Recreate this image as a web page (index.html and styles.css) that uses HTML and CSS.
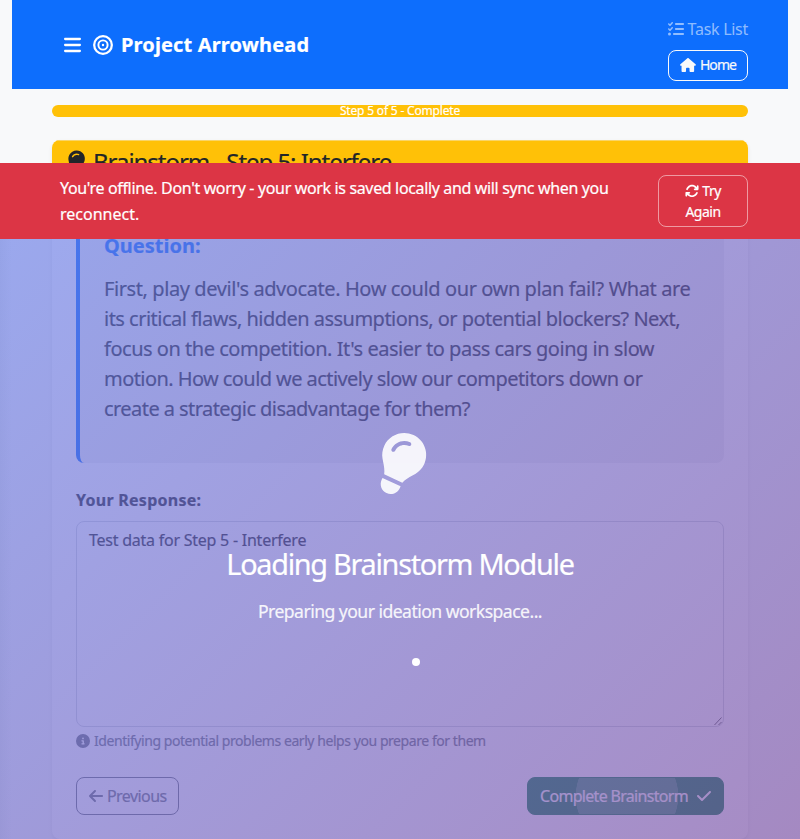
FILE: index.html
```html
<!DOCTYPE html>
<html lang="en">
<head>
<meta charset="utf-8">
<title>Project Arrowhead</title>
<link rel="stylesheet" href="styles.css">
</head>
<body>
<header class="navbar">
  <div class="brand">
    <svg class="bars" viewBox="0 0 448 512"><path d="M0 96c0-17.700 14.300-32 32-32h384c17.700 0 32 14.300 32 32s-14.300 32-32 32H32C14.300 128 0 113.700 0 96zm0 160c0-17.700 14.300-32 32-32h384c17.700 0 32 14.300 32 32s-14.300 32-32 32H32c-17.700 0-32-14.300-32-32zm448 160c0 17.700-14.300 32-32 32H32c-17.700 0-32-14.300-32-32s14.300-32 32-32h384c17.700 0 32 14.300 32 32z"/></svg>
    <svg class="bullseye" viewBox="0 0 512 512"><g fill="none" stroke="currentColor"><circle cx="256" cy="256" r="226" stroke-width="58"/><circle cx="256" cy="256" r="118" stroke-width="50"/></g><circle cx="256" cy="256" r="30"/></svg>
    <span class="brand-name">Project Arrowhead</span>
  </div>
  <nav class="nav-links">
    <a class="task-link"><svg viewBox="0 0 512 512"><path d="M152.100 38.200c9.900 8.900 10.700 24 1.800 33.900l-72 80c-4.400 4.900-10.600 7.800-17.200 7.900s-12.900-2.400-17.600-7L7 113C-2.300 103.600-2.300 88.400 7 79s24.600-9.400 33.900 0l22.100 22.100 55.100-61.200c8.900-9.900 24-10.700 33.900-1.800zm0 160c9.900 8.900 10.700 24 1.800 33.900l-72 80c-4.400 4.900-10.600 7.800-17.200 7.900s-12.900-2.400-17.600-7L7 273c-9.400-9.400-9.400-24.600 0-33.900s24.600-9.400 33.900 0l22.100 22.100 55.100-61.200c8.900-9.900 24-10.700 33.900-1.800zM224 96c0-17.700 14.300-32 32-32h224c17.700 0 32 14.300 32 32s-14.300 32-32 32H256c-17.700 0-32-14.300-32-32zm0 160c0-17.700 14.300-32 32-32h224c17.700 0 32 14.300 32 32s-14.300 32-32 32H256c-17.700 0-32-14.300-32-32zM160 416c0-17.700 14.300-32 32-32h288c17.700 0 32 14.300 32 32s-14.300 32-32 32H192c-17.700 0-32-14.300-32-32zM48 368a48 48 0 1 1 0 96 48 48 0 1 1 0-96z"/></svg><span>Task List</span></a>
    <a class="home-btn"><svg viewBox="0 0 576 512"><path d="M575.800 255.500c0 18-15 32.100-32 32.100h-32l.7 160.200c0 2.700-.2 5.400-.5 8.100V472c0 22.100-17.900 40-40 40h-88c-22.100 0-40-17.900-40-40v-88c0-17.700-14.300-32-32-32h-64c-17.700 0-32 14.300-32 32v88c0 22.100-17.900 40-40 40h-83.900c-22.100 0-40-17.900-40-40V287.600H32c-18 0-32-14-32-32.100 0-9 3-17 10-24L266.400 8c7-7 15-8 22-8s15 2 21 7l255.400 224.500c8 7 12 15 11 24z"/></svg><span>Home</span></a>
  </nav>
</header>

<main class="content">
  <div class="progress"><span>Step 5 of 5 - Complete</span></div>
  <section class="card">
    <div class="card-header">
      <svg class="bulb-small" viewBox="0 0 384 512"><path d="M272 384c9.600-31.900 29.500-59.100 49.200-86.200 5.200-7.100 10.400-14.200 15.400-21.400 19.800-28.500 31.400-63 31.400-100.300C368 78.800 289.200 0 192 0S16 78.800 16 176c0 37.300 11.600 71.900 31.400 100.300 5 7.200 10.200 14.300 15.400 21.400 19.800 27.100 39.700 54.400 49.200 86.200h160zM192 512c44.200 0 80-35.800 80-80v-16H112v16c0 44.200 35.800 80 80 80zM112 176c0 8.800-7.200 16-16 16s-16-7.200-16-16c0-61.900 50.100-112 112-112 8.800 0 16 7.200 16 16s-7.200 16-16 16c-44.200 0-80 35.800-80 80z"/></svg>
      <h1>Brainstorm - Step 5: Interfere</h1>
    </div>
    <div class="card-body">
      <div class="question">
        <h2>Question:</h2>
        <p><span class="l1">First, play devil's advocate. How could our own plan fail? What are</span><br><span class="l2">its critical flaws, hidden assumptions, or potential blockers? Next,</span><br><span class="l3">focus on the competition. It's easier to pass cars going in slow</span><br><span class="l4">motion. How could we actively slow our competitors down or</span><br><span class="l5">create a strategic disadvantage for them?</span></p>
      </div>
      <label class="response-label">Your Response:</label>
      <div class="response"><span>Test data for Step 5 - Interfere</span>
        <svg class="grip" viewBox="0 0 10 10"><path d="M1.500 9 8.500 1.500M5.500 9 8.500 6"/></svg>
      </div>
      <div class="hint"><svg viewBox="0 0 512 512"><path d="M256 512a256 256 0 1 0 0-512 256 256 0 1 0 0 512zm-40-176h24v-64h-24c-13.300 0-24-10.700-24-24s10.700-24 24-24h48c13.300 0 24 10.700 24 24v88h8c13.300 0 24 10.700 24 24s-10.700 24-24 24h-80c-13.300 0-24-10.700-24-24s10.700-24 24-24zm40-208a32 32 0 1 1 0 64 32 32 0 1 1 0-64z"/></svg><span>Identifying potential problems early helps you prepare for them</span></div>
      <div class="actions">
        <button class="btn prev"><svg viewBox="0 0 448 512"><path d="M9.400 233.400c-12.500 12.500-12.500 32.800 0 45.300l160 160c12.500 12.500 32.800 12.500 45.300 0s12.500-32.800 0-45.300L109.200 288H416c17.700 0 32-14.300 32-32s-14.300-32-32-32H109.300l105.400-105.400c12.500-12.500 12.500-32.800 0-45.300s-32.800-12.500-45.300 0l-160 160z"/></svg><span>Previous</span></button>
        <button class="btn complete"><span>Complete Brainstorm</span><svg viewBox="0 0 448 512"><path d="M438.600 105.400c12.500 12.500 12.500 32.800 0 45.300l-256 256c-12.500 12.500-32.800 12.500-45.300 0l-128-128c-12.500-12.500-12.500-32.800 0-45.300s32.800-12.500 45.300 0L160 338.700l233.400-233.300c12.500-12.500 32.800-12.500 45.300 0z"/></svg></button>
      </div>
    </div>
  </section>
</main>

<div class="loading">
  <svg class="bulb" viewBox="0 0 384 512"><path d="M272 384c9.600-31.900 29.500-59.100 49.200-86.200 5.200-7.100 10.400-14.200 15.400-21.400 19.800-28.500 31.400-63 31.400-100.300C368 78.800 289.200 0 192 0S16 78.800 16 176c0 37.300 11.600 71.900 31.400 100.300 5 7.200 10.200 14.300 15.400 21.400 19.800 27.100 39.700 54.400 49.200 86.200h160zM192 512c44.200 0 80-35.800 80-80v-16H112v16c0 44.200 35.800 80 80 80zM112 176c0 8.800-7.200 16-16 16s-16-7.200-16-16c0-61.900 50.100-112 112-112 8.800 0 16 7.200 16 16s-7.200 16-16 16c-44.200 0-80 35.800-80 80z"/></svg>
  <div class="loading-title"><span>Loading Brainstorm Module</span></div>
  <div class="loading-text"><span>Preparing your ideation workspace...</span></div>
  <i class="dot"></i>
</div>

<div class="offline">
  <p><span class="o1">You're offline. Don't worry - your work is saved locally and will sync when you</span><br><span class="o2">reconnect.</span></p>
  <button class="retry"><svg viewBox="0 0 512 512"><path d="M105.100 202.600c7.700-21.800 20.200-42.300 37.800-59.800 62.500-62.500 163.800-62.500 226.300 0L386.300 160H352c-17.700 0-32 14.300-32 32s14.300 32 32 32h111.500c17.700 0 32-14.300 32-32V80c0-17.700-14.300-32-32-32s-32 14.300-32 32v35.200L414.400 97.600c-87.500-87.500-229.300-87.500-316.800 0C73.200 122 55.600 150.700 44.800 181.400c-5.900 16.700 2.900 34.900 19.500 40.800s34.900-2.900 40.800-19.500zM39 289.300c-5 1.500-9.800 4.200-13.700 8.200-4 4-6.700 8.800-8.100 14-.9 3.100-1.200 6.200-1.200 9.100V432c0 17.700 14.300 32 32 32s32-14.300 32-32v-35.100l17.600 17.500c87.500 87.400 229.300 87.400 316.700 0 24.400-24.400 42.100-53.100 52.900-83.700 5.900-16.700-2.900-34.900-19.500-40.800s-34.900 2.900-40.800 19.500c-7.700 21.800-20.200 42.300-37.800 59.800-62.500 62.500-163.800 62.500-226.300 0L125.600 352H160c17.700 0 32-14.300 32-32s-14.300-32-32-32H48.400c-3.200 0-6.400.4-9.400 1.300z"/></svg> Try<br>Again</button>
</div>
</body>
</html>
```
FILE: styles.css
```css
* { box-sizing: border-box; }
body {
  position: relative;
  margin: 0;
  height: 839px;
  overflow: hidden;
  background: #f8f9fa;
  color: #212529;
  font: 16px/24px Tahoma, "Noto Sans", sans-serif;
  -webkit-text-stroke: .2px currentColor;
}
svg { fill: currentColor; flex: none; overflow: visible; }
span { white-space: nowrap; }
h1, h2, p { margin: 0; }
button { font: inherit; }

.navbar {
  display: flex;
  justify-content: space-between;
  align-items: center;
  height: 89px;
  margin: 0 12px;
  padding: 0 40px;
  background: #0d6efd;
  color: #fff;
}
.brand { display: flex; align-items: center; padding-left: 12px; font-size: 20px; font-weight: 700; letter-spacing: .15px; }
.bars { width: 17px; height: 20px; margin-right: 12px; }
.bullseye { width: 20px; height: 20px; margin-right: 8px; }
.nav-links { display: flex; flex-direction: column; align-items: flex-end; gap: 9px; padding-top: 8px; }
.task-link { display: flex; align-items: center; gap: 4px; color: rgba(255, 255, 255, .55); letter-spacing: -.28px; -webkit-text-stroke: 0; }
.task-link svg { width: 16px; height: 16px; }
.home-btn {
  display: flex;
  align-items: center;
  justify-content: center;
  gap: 4px;
  width: 80px;
  height: 31px;
  border: 1px solid #f8f9fa;
  border-radius: 8px;
  color: #f8f9fa;
  font-size: 14px;
  letter-spacing: -.9px;
}
.home-btn svg { width: 16px; height: 14px; }

.content { padding: 16px 52px 0; }
.progress {
  height: 12px;
  margin-bottom: 23px;
  border-radius: 6px;
  background: #ffc107;
  color: #fff;
  font-size: 12px;
  line-height: 12px;
  letter-spacing: -.18px;
  text-align: center;
}
.card {
  height: 699px;
  border-radius: 8px;
  background: #fff;
  box-shadow: 0 2px 4px rgba(0, 0, 0, .08);
  overflow: hidden;
}
.card-header {
  display: flex;
  align-items: center;
  height: 46px;
  padding: 0 16px;
  background: #ffc107;
  border-top: 1px solid #f9d568;
}
.card-header h1 { margin-top: -5px; font-size: 24px; font-weight: 400; line-height: 29px; letter-spacing: -1.040px; }
.bulb-small { width: 18px; height: 24px; margin: -3px 9px 0 -2px; transform: rotate(26deg); }
.card-body { padding: 24px 24px 0; }
.question {
  height: 252.500px;
  padding: 24px 24px 0;
  border-left: 4px solid #0d6efd;
  border-radius: 8px;
  background: #f0f1f3;
  font-size: 20px;
  line-height: 30px;
}
.question h2 { margin-bottom: 16px; font-size: 20px; line-height: 24px; color: #0d6efd; }
.l1 { letter-spacing: -.410px; }
.l2 { letter-spacing: -.520px; }
.l3 { letter-spacing: -.480px; }
.l4 { letter-spacing: -.570px; }
.l5 { letter-spacing: -.560px; }
.response-label { display: block; margin: 25px 0 9px; font-weight: 700; letter-spacing: .27px; }
.response {
  position: relative;
  height: 206px;
  padding: 6px 12px;
  border: 1px solid #d3d8dd;
  border-radius: 8px;
  letter-spacing: -.24px;
}
.grip { position: absolute; right: 0; bottom: 0; width: 10px; height: 10px; fill: none; stroke: #666; stroke-width: 1; }
.hint { display: flex; align-items: center; gap: 4px; height: 21px; margin-top: 4px; color: #6c757d; font-size: 14px; letter-spacing: -.440px; }
.hint svg { width: 14px; height: 14px; }
.actions { display: flex; justify-content: space-between; margin-top: 25px; }
.btn { display: flex; align-items: center; height: 38px; padding: 0 12px; border-radius: 8px; }
.btn svg { width: 14px; height: 16px; }
.prev { width: 103px; gap: 4px; border: 1px solid #6c757d; background: transparent; color: #6c757d; letter-spacing: -.570px; }
.complete {
  width: 197px;
  justify-content: space-between;
  border: 1px solid #198754;
  background: radial-gradient(circle at 99px 50%, rgba(255, 255, 255, .2) 51px, transparent 51.500px) #198754;
  color: #fff;
  letter-spacing: -.690px;
}

.loading {
  position: absolute;
  inset: 163px 0 0;
  display: flex;
  flex-direction: column;
  align-items: center;
  padding-top: 269px;
  background:
    linear-gradient(90deg, rgba(60, 80, 130, .05), transparent 12px),
    linear-gradient(135deg, rgba(102, 126, 234, .644), rgba(118, 75, 162, .644));
  color: #fff;
}
.bulb { width: 48px; height: 64px; opacity: .9; transform: rotate(25deg); }
.loading-title { margin-top: 48px; font-size: 28.800px; line-height: 40px; letter-spacing: -1.260px; }
.loading-text { margin-top: 14px; font-size: 17.600px; line-height: 26px; letter-spacing: -.540px; opacity: .9; }
.dot { width: 8px; height: 8px; margin: 34px 0 0 32px; border-radius: 50%; background: #fff; }

.offline {
  position: absolute;
  inset: 163px 0 auto;
  display: flex;
  justify-content: space-between;
  height: 76px;
  padding: 12px 52px 12px 60px;
  background: #dc3545;
  color: #fff;
  line-height: 26px;
}
.o1 { letter-spacing: -.350px; }
.retry {
  width: 90px;
  height: 52px;
  padding: 0;
  border: 1px solid rgba(255, 255, 255, .5);
  border-radius: 8px;
  background: transparent;
  color: #fff;
  font-size: 14px;
  line-height: 21px;
  letter-spacing: -.5px;
}
.retry svg { width: 14px; height: 14px; vertical-align: -2px; }
```
